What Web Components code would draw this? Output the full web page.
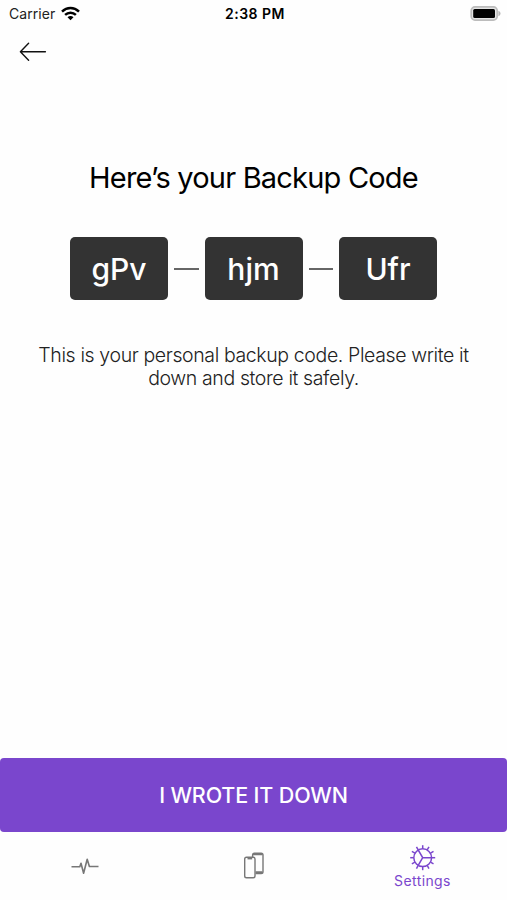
<!DOCTYPE html>
<html lang="en">
<head>
<meta charset="utf-8">
<meta name="viewport" content="width=device-width, initial-scale=1">
<title>Backup Code</title>
<style>
  html, body {
    height: 100%;
    margin: 0;
    background: #fefefe;
  }

  body {
    font-family: Inter, "Liberation Sans", sans-serif;
    color: #000;
  }
</style>
</head>
<body>
<x-backup-screen></x-backup-screen>

<script>
class StatusBar extends HTMLElement {
  constructor() {
    super();
    this.attachShadow({mode: 'open'});
    this.shadowRoot.innerHTML = `
      <style>
        :host {
          display: grid;
          grid-template-columns: 1fr auto 1fr;
          align-items: center;
          height: 27px;
          padding: 0 6px 0 9px;
          font-size: 14px;
          line-height: 27px;
        }
        .carrier {
          display: flex;
          align-items: center;
          gap: 6px;
          color: #222;
          letter-spacing: 0.05px;
        }
        .time {
          font-size: 14px;
          font-weight: 600;
          letter-spacing: 0.5px;
        }
        .battery {
          justify-self: end;
        }
        svg {
          display: block;
        }
      </style>
      <div class="carrier">
        <span>Carrier</span>
        <svg width="19" height="15" viewBox="0 0 19 15">
          <g fill="none" stroke="#000" stroke-width="2.5">
            <path d="M1 5.6C5.9 0.9 13.1 0.9 18 5.6"/>
            <path d="M4.1 8.9C7.2 6 11.8 6 14.9 8.9"/>
          </g>
          <path d="M6.5 11.3C8.2 9.7 10.8 9.7 12.5 11.3L9.5 14.3Z"/>
        </svg>
      </div>
      <div class="time">2:38 PM</div>
      <svg class="battery" width="31" height="15" viewBox="0 0 31 15">
        <rect x="1.2" y="0.9" width="26" height="13.2" rx="3.8" fill="#e4e4e4" stroke="#bcbcbc" stroke-width="1.7"/>
        <rect x="3.2" y="3" width="21.8" height="9" rx="1.5"/>
        <path d="M28.4 4.8C31.2 6 31.2 9 28.4 10.2Z" fill="#b5b5b5"/>
      </svg>
    `;
  }
}

class CodeBlock extends HTMLElement {
  constructor() {
    super();
    this.attachShadow({mode: 'open'});
    this.shadowRoot.innerHTML = `
      <style>
        :host {
          display: flex;
          align-items: center;
          justify-content: center;
          box-sizing: border-box;
          width: 98px;
          height: 63px;
          border-radius: 5px;
          background: #333;
          color: #fff;
          font-size: 30px;
          font-weight: 450;
        }
      </style>
      <slot></slot>
    `;
  }
}

class BackupCode extends HTMLElement {
  constructor() {
    super();
    this.attachShadow({mode: 'open'});
    this.shadowRoot.innerHTML = `
      <style>
        :host {
          display: flex;
          align-items: center;
          justify-content: center;
        }
        i {
          width: 24.5px;
          height: 2px;
          margin: 0 6px;
          background: #666;
        }
      </style>
    `;
  }

  connectedCallback() {
    this.getAttribute('code').split('-').forEach((part, index) => {
      if (index > 0) {
        this.shadowRoot.appendChild(document.createElement('i'));
      }
      const block = document.createElement('x-code-block');
      block.textContent = part;
      this.shadowRoot.appendChild(block);
    });
  }
}

class PrimaryButton extends HTMLElement {
  constructor() {
    super();
    this.attachShadow({mode: 'open'});
    this.shadowRoot.innerHTML = `
      <style>
        :host {
          display: block;
        }
        button {
          display: block;
          width: 100%;
          height: 74px;
          padding: 0;
          border: 0;
          border-radius: 4px;
          background: #7a46cd;
          color: #fff;
          font: 450 21.5px/74px Inter, "Liberation Sans", sans-serif;
          letter-spacing: -0.15px;
        }
      </style>
      <button type="button"><slot></slot></button>
    `;
  }
}

class TabItem extends HTMLElement {
  constructor() {
    super();
    this.attachShadow({mode: 'open'});
    this.shadowRoot.innerHTML = `
      <style>
        :host {
          display: flex;
          flex-direction: column;
          align-items: center;
          flex: 1;
          color: #777;
          font-size: 14px;
          line-height: 18px;
        }
        :host([selected]) {
          color: #7a46cd;
        }
      </style>
      <slot name="icon"></slot>
      <slot></slot>
    `;
  }
}

class TabBar extends HTMLElement {
  constructor() {
    super();
    this.attachShadow({mode: 'open'});
    this.shadowRoot.innerHTML = `
      <style>
        :host {
          display: flex;
          height: 68px;
        }
        svg {
          display: block;
          fill: none;
          stroke: currentColor;
        }
        .pulse, .devices {
          margin-top: 19px;
        }
        .gear {
          margin-top: 12px;
        }
        .label {
          letter-spacing: 0.4px;
        }
      </style>
      <x-tab-item>
        <svg slot="icon" class="pulse" width="28" height="30" viewBox="0 0 28 30" stroke-width="1.6" stroke-linejoin="round">
          <path d="M0.5 15.8H8.8L10 12.2L12.6 22.3L16.2 8.2L18.4 15.5H27.5"/>
        </svg>
      </x-tab-item>
      <x-tab-item>
        <svg slot="icon" class="devices" width="22" height="30" viewBox="0 0 22 30" stroke-width="1.4">
          <path d="M9.6 6.1V4Q9.6 2.2 11.4 2.2H18.2Q20 2.2 20 4V20.8Q20 22.6 18.2 22.6H12.5"/>
          <path d="M10 3.4H19.5M12.5 21.2H19.5" stroke-width="1.8"/>
          <rect x="1.7" y="6.3" width="10.3" height="20.4" rx="1.8"/>
          <path d="M4.5 7.7H9.2" stroke-width="1.4"/>
        </svg>
      </x-tab-item>
      <x-tab-item selected>
        <svg slot="icon" class="gear" width="28" height="28" viewBox="-13.7 -13.7 28 28" stroke-width="1.5">
          <circle r="8.9"/>
          <path d="M0 0H8.9M0 0L-4.5 -7.7M0 0L-4.5 7.7"/>
          <g class="teeth"></g>
        </svg>
        <span class="label">Settings</span>
      </x-tab-item>
    `;

    // twelve teeth around the gear ring
    const teeth = this.shadowRoot.querySelector('.teeth');
    for (let angle = 0; angle < 360; angle += 30) {
      const tooth = document.createElementNS('http://www.w3.org/2000/svg', 'path');
      tooth.setAttribute('d', 'M9 0H12.5');
      tooth.setAttribute('transform', `rotate(${angle})`);
      teeth.appendChild(tooth);
    }
  }
}

class BackupScreen extends HTMLElement {
  constructor() {
    super();
    this.attachShadow({mode: 'open'});
    this.shadowRoot.innerHTML = `
      <style>
        :host {
          display: flex;
          flex-direction: column;
          height: 100vh;
          overflow: hidden;
        }
        nav {
          height: 50px;
          padding: 14px 0 0 19px;
          box-sizing: border-box;
        }
        nav svg {
          display: block;
        }
        main {
          flex: 1;
          padding: 81px 30px 0;
          text-align: center;
        }
        h1 {
          margin: 0 0 39px;
          font-size: 29px;
          font-weight: 400;
          line-height: 40px;
          letter-spacing: -0.8px;
        }
        p {
          margin: 44px 0 0;
          color: #222;
          font-size: 19.5px;
          font-weight: 300;
          line-height: 23px;
          letter-spacing: -0.38px;
        }
      </style>
      <x-status-bar></x-status-bar>
      <nav>
        <svg width="28" height="21" viewBox="0 0 28 21" fill="none" stroke="#111" stroke-width="1.4" stroke-linecap="round" stroke-linejoin="round">
          <path d="M26.4 10.7H1.4M9.6 2.2L1.4 10.7L9.6 19.2"/>
        </svg>
      </nav>
      <main>
        <h1>Here’s your Backup Code</h1>
        <x-backup-code code="gPv-hjm-Ufr"></x-backup-code>
        <p>This is your personal backup code. Please write it<br>down and store it safely.</p>
      </main>
      <x-primary-button>I WROTE IT DOWN</x-primary-button>
      <x-tab-bar></x-tab-bar>
    `;
  }
}

customElements.define('x-status-bar', StatusBar);
customElements.define('x-code-block', CodeBlock);
customElements.define('x-backup-code', BackupCode);
customElements.define('x-primary-button', PrimaryButton);
customElements.define('x-tab-item', TabItem);
customElements.define('x-tab-bar', TabBar);
customElements.define('x-backup-screen', BackupScreen);
</script>
</body>
</html>
